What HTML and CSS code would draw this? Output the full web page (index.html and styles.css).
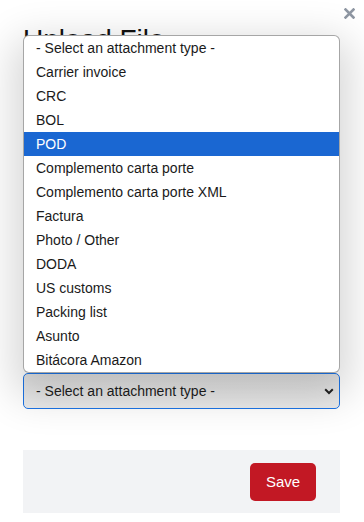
FILE: index.html
```html
<!DOCTYPE html>
<html>
<head>
<meta charset="utf-8">
<link rel="stylesheet" href="styles.css">
</head>
<body>
<div class="modal">
  <button class="close" aria-label="Close">
    <svg width="11" height="11" viewBox="0 0 11 11"><path d="M1.5 1.5 L9.5 9.5 M9.5 1.5 L1.5 9.5" stroke="#8f97a3" stroke-width="2.6" stroke-linecap="square"/></svg>
  </button>
  <h1 class="title">Upload File</h1>
  <div class="dropzone"></div>
  <div class="filebar"></div>
  <div class="field">
    <div class="select">
      <span>- Select an attachment type -</span>
      <svg class="chev" width="10" height="7" viewBox="0 0 10 7"><path d="M1.2 1.3 L5 5 L8.8 1.3" stroke="#222" stroke-width="2" fill="none"/></svg>
    </div>
    <ul class="popup">
      <li>- Select an attachment type -</li>
      <li>Carrier invoice</li>
      <li>CRC</li>
      <li>BOL</li>
      <li class="active">POD</li>
      <li>Complemento carta porte</li>
      <li>Complemento carta porte XML</li>
      <li>Factura</li>
      <li>Photo / Other</li>
      <li>DODA</li>
      <li>US customs</li>
      <li>Packing list</li>
      <li>Asunto</li>
      <li>Bitácora Amazon</li>
    </ul>
  </div>
  <div class="footer">
    <button class="save">Save</button>
  </div>
</div>
</body>
</html>
```

FILE: styles.css
```css
* { box-sizing: border-box; }
html, body { margin: 0; padding: 0; background: #fff; }
body { font-family: "Liberation Sans", Arial, sans-serif; width: 364px; height: 522px; overflow: hidden; }
.modal { position: relative; padding: 24px 24px 0 23px; }
.close { position: absolute; top: 8px; right: 9px; border: 0; background: none; padding: 0; width: 11px; height: 11px; display: flex; }
.title { margin: 0; font-size: 28px; font-weight: 400; line-height: 32px; color: #111; }
.dropzone { margin-top: 12px; height: 240px; border: 1px dashed #777; border-radius: 4px; }
.filebar { margin-top: 14px; height: 32px; background: #2b2b2e; border-radius: 4px; }
.field { position: relative; margin-top: 19px; }
.select { height: 36px; border: 1.5px solid #1c74e6; border-radius: 5px; background: linear-gradient(#e2e2e2, #ebebeb); display: flex; align-items: center; justify-content: space-between; padding: 0 5px 0 12px; font-size: 14px; color: #1d1d1d; }
.chev { margin-top: 1px; }
.popup { position: absolute; left: 0; right: 0; bottom: 36px; margin: 0; padding: 0; list-style: none; background: #fff; border: 1px solid rgba(0,0,0,0.35); border-radius: 6px; overflow: hidden; box-shadow: 0 14px 40px 10px rgba(0,0,0,0.16); font-size: 14px; color: #1a1a1a; }
.popup li { height: 24px; line-height: 24px; padding-left: 12px; white-space: nowrap; }
.popup li.active { background: #1a67d2; color: #fff; }
.footer { margin-top: 41px; height: 63px; background: #f2f3f5; display: flex; align-items: center; justify-content: flex-end; padding-right: 24px; }
.save { width: 66px; height: 38px; border: 0; border-radius: 5px; background: #c21824; color: #fff; font-family: "Liberation Sans", Arial, sans-serif; font-size: 15px; padding: 0; }
```
